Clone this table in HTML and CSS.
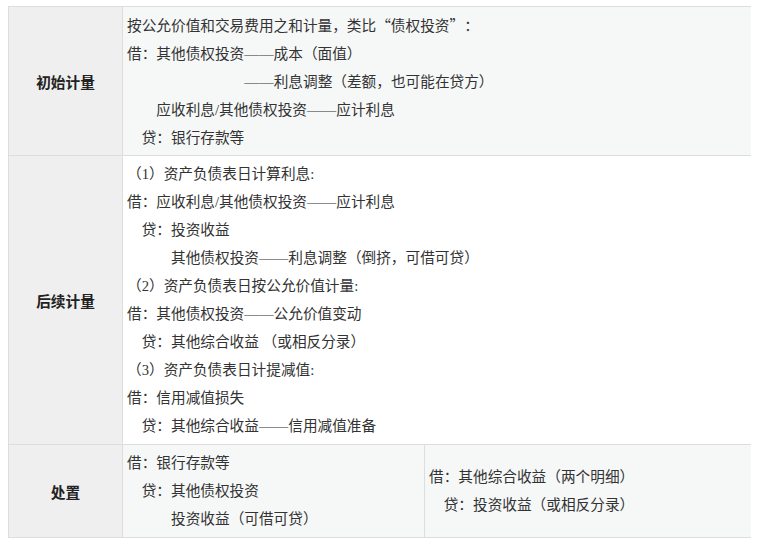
FILE: index.html
```html
<!DOCTYPE html>
<html lang="zh-CN">
<head>
<meta charset="utf-8">
<title>其他债权投资</title>
<link rel="stylesheet" href="styles.css">
</head>
<body>
<table class="sheet">
  <colgroup>
    <col class="c-label">
    <col class="c-left">
    <col class="c-right">
  </colgroup>
  <tbody>
    <tr class="tinted first">
      <th class="label">初始计量</th>
      <td class="body" colspan="2">
        <div class="ln">按公允价值和交易费用之和计量，类比<span class="fw">“</span>债权投资<span class="fw">”</span>：</div>
        <div class="ln">借：其他债权投资——成本（面值）</div>
        <div class="ln i8">——利息调整（差额，也可能在贷方）</div>
        <div class="ln i2">应收利息/其他债权投资——应计利息</div>
        <div class="ln i1">贷：银行存款等</div>
      </td>
    </tr>
    <tr class="plain">
      <th class="label">后续计量</th>
      <td class="body" colspan="2">
        <div class="ln">（1）资产负债表日计算利息:</div>
        <div class="ln">借：应收利息/其他债权投资——应计利息</div>
        <div class="ln i1">贷：投资收益</div>
        <div class="ln i3">其他债权投资——利息调整（倒挤，可借可贷）</div>
        <div class="ln">（2）资产负债表日按公允价值计量:</div>
        <div class="ln">借：其他债权投资——公允价值变动</div>
        <div class="ln i1">贷：其他综合收益 （或相反分录）</div>
        <div class="ln">（3）资产负债表日计提减值:</div>
        <div class="ln">借：信用减值损失</div>
        <div class="ln i1">贷：其他综合收益——信用减值准备</div>
      </td>
    </tr>
    <tr class="tinted">
      <th class="label">处置</th>
      <td class="body">
        <div class="ln">借：银行存款等</div>
        <div class="ln i1">贷：其他债权投资</div>
        <div class="ln i3">投资收益（可借可贷）</div>
      </td>
      <td class="body">
        <div class="ln">借：其他综合收益（两个明细）</div>
        <div class="ln i1">贷：投资收益（或相反分录）</div>
      </td>
    </tr>
  </tbody>
</table>
</body>
</html>
```
FILE: styles.css
```css
html, body {
  background: #ffffff;
}
body {
  margin: 6px 8px;
  font-family: "Liberation Serif", "Noto Sans CJK SC", serif;
  font-size: 14.67px;
  color: #333333;
  text-spacing-trim: space-all;
}
.sheet {
  width: 744px;
  border-collapse: collapse;
  table-layout: fixed;
}
.c-label { width: 114px; }
.c-left { width: 302px; }
.c-right { width: 328px; }
.sheet th,
.sheet td {
  border: 1px solid #dddddd;
  vertical-align: middle;
}
.label {
  background: #efefef;
  font-family: "Noto Sans CJK SC", sans-serif;
  font-weight: 700;
  font-size: 14.67px;
  color: #222222;
  text-align: center;
  padding: 0;
}
.body {
  padding: 4px;
  text-align: left;
}
.first .body { padding-bottom: 3px; }
.tinted .body { background: #f6f8f8; }
.plain .body { background: #ffffff; }
.ln {
  line-height: 28px;
  white-space: nowrap;
}
.fw {
  font-family: "Noto Sans CJK SC", sans-serif;
  font-feature-settings: "fwid" 1;
}
.i1 { padding-left: 1em; }
.i2 { padding-left: 2em; }
.i3 { padding-left: 3em; }
.i8 { padding-left: 8em; }
```
